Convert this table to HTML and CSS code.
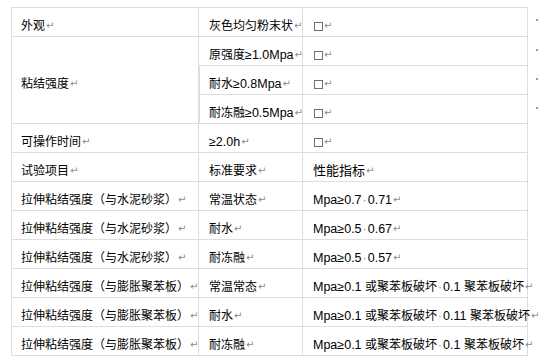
FILE: index.html
```html
<!DOCTYPE html>
<html lang="zh">
<head>
<meta charset="utf-8">
<link rel="stylesheet" href="styles.css">
</head>
<body>
<div class="page">
<table class="spec">
  <colgroup>
    <col class="c1"><col class="c2"><col class="c3"><col class="c4">
  </colgroup>
  <tbody>
    <tr class="first">
      <td>外观<span class="rm">↵</span></td>
      <td>灰色均匀粉末状<span class="rm">↵</span></td>
      <td><span class="box"></span><span class="rm">↵</span></td>
      <td class="end"><span class="tick"></span></td>
    </tr>
    <tr>
      <td rowspan="3" class="mid">粘结强度<span class="rm">↵</span></td>
      <td>原强度<span class="num">≥1.0Mpa</span><span class="rm">↵</span></td>
      <td><span class="box"></span><span class="rm">↵</span></td>
      <td class="end"><span class="tick"></span></td>
    </tr>
    <tr>
      <td>耐水<span class="num">≥0.8Mpa</span><span class="rm">↵</span></td>
      <td><span class="box"></span><span class="rm">↵</span></td>
      <td class="end"><span class="tick"></span></td>
    </tr>
    <tr>
      <td>耐冻融<span class="num">≥0.5Mpa</span><span class="rm">↵</span></td>
      <td><span class="box"></span><span class="rm">↵</span></td>
      <td class="end"><span class="tick"></span></td>
    </tr>
    <tr>
      <td>可操作时间<span class="rm">↵</span></td>
      <td><span class="num">≥2.0h</span><span class="rm">↵</span></td>
      <td><span class="box"></span><span class="rm">↵</span></td>
      <td class="end"></td>
    </tr>
    <tr>
      <td>试验项目<span class="rm">↵</span></td>
      <td>标准要求<span class="rm">↵</span></td>
      <td class="big">性能指标<span class="rm">↵</span></td>
      <td class="end"></td>
    </tr>
    <tr>
      <td>拉伸粘结强度（与水泥砂浆）<span class="rm">↵</span></td>
      <td>常温状态<span class="rm">↵</span></td>
      <td><span class="num">Mpa≥0.7<span class="sp">·</span>0.71</span><span class="rm">↵</span></td>
      <td class="end"></td>
    </tr>
    <tr>
      <td>拉伸粘结强度（与水泥砂浆）<span class="rm">↵</span></td>
      <td>耐水<span class="rm">↵</span></td>
      <td><span class="num">Mpa≥0.5<span class="sp">·</span>0.67</span><span class="rm">↵</span></td>
      <td class="end"></td>
    </tr>
    <tr>
      <td>拉伸粘结强度（与水泥砂浆）<span class="rm">↵</span></td>
      <td>耐冻融<span class="rm">↵</span></td>
      <td><span class="num">Mpa≥0.5<span class="sp">·</span>0.57</span><span class="rm">↵</span></td>
      <td class="end"></td>
    </tr>
    <tr>
      <td>拉伸粘结强度（与膨胀聚苯板）<span class="rm">↵</span></td>
      <td>常温常态<span class="rm">↵</span></td>
      <td><span class="num">Mpa≥0.1 </span>或聚苯板破坏<span class="sp">·</span><span class="num">0.1 </span>聚苯板破坏<span class="rm">↵</span></td>
      <td class="end"></td>
    </tr>
    <tr>
      <td>拉伸粘结强度（与膨胀聚苯板）<span class="rm">↵</span></td>
      <td>耐水<span class="rm">↵</span></td>
      <td><span class="num">Mpa≥0.1 </span>或聚苯板破坏<span class="sp">·</span><span class="num">0.11 </span>聚苯板破坏<span class="rm">↵</span></td>
      <td class="end"></td>
    </tr>
    <tr>
      <td>拉伸粘结强度（与膨胀聚苯板）<span class="rm">↵</span></td>
      <td>耐冻融<span class="rm">↵</span></td>
      <td><span class="num">Mpa≥0.1 </span>或聚苯板破坏<span class="sp">·</span><span class="num">0.1 </span>聚苯板破坏<span class="rm">↵</span></td>
      <td class="end"></td>
    </tr>
  </tbody>
</table>
</div>
</body>
</html>
```
FILE: styles.css
```css
html, body {
  margin: 0;
  padding: 0;
  background: #ffffff;
}
.page {
  padding: 7px 0 0 11px;
  overflow: hidden;
}
.spec {
  border-collapse: separate;
  border-spacing: 0;
  table-layout: fixed;
  width: 527px;
  font-family: "Noto Sans CJK SC", "Liberation Sans", sans-serif;
  font-size: 12px;
  color: #000;
}
.c1 { width: 188px; }
.c2 { width: 104px; }
.c3 { width: 225px; }
.c4 { width: 10px; }
.spec td {
  border-bottom: 1px solid #dedede;
  border-right: 1px solid #dedede;
  padding: 9px 0 3px 10px;
  height: 16px;
  line-height: 16px;
  white-space: nowrap;
  overflow: visible;
  vertical-align: top;
}
.spec td:first-child {
  border-left: 1px solid #dedede;
  padding-left: 9px;
}
.spec tr.first td {
  border-top: 1px solid #dedede;
}
.spec td.mid {
  vertical-align: middle;
}
.spec td.end,
.spec tr.first td.end {
  border: none;
  padding: 0;
  position: relative;
}
.tick {
  display: block;
  position: absolute;
  right: 0;
  top: 12px;
  width: 2px;
  height: 2px;
  background: #9a9a9a;
}
.num {
  font-family: "Liberation Sans", sans-serif;
  font-size: 12.5px;
  line-height: 0;
}
.rm {
  font-family: "DejaVu Sans", sans-serif;
  font-size: 10px;
  line-height: 0;
  color: #8a8a8a;
  margin-left: 1px;
  vertical-align: 1px;
}
.sp {
  color: #8a8a8a;
  font-family: "Liberation Sans", sans-serif;
  line-height: 0;
  padding: 0 1px;
}
.box {
  display: inline-block;
  width: 7px;
  height: 7px;
  border: 1px solid #707070;
  vertical-align: -1px;
  margin-left: 1px;
  line-height: 0;
}
.big {
  font-size: 13px;
}
```
